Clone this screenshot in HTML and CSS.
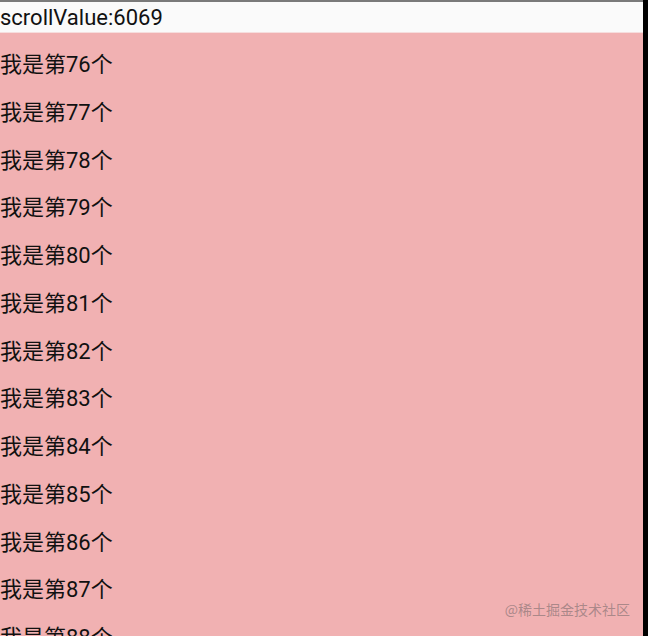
FILE: index.html
```html
<!DOCTYPE html>
<html>
<head>
<meta charset="utf-8">
<link rel="stylesheet" href="styles.css">
</head>
<body>
<div class="screen">
  <div class="main">
    <div class="topline"></div>
    <div class="header">scrollValue:6069</div>
    <div class="list">
      <div class="item">我是第76个</div>
      <div class="item">我是第77个</div>
      <div class="item">我是第78个</div>
      <div class="item">我是第79个</div>
      <div class="item">我是第80个</div>
      <div class="item">我是第81个</div>
      <div class="item">我是第82个</div>
      <div class="item">我是第83个</div>
      <div class="item">我是第84个</div>
      <div class="item">我是第85个</div>
      <div class="item">我是第86个</div>
      <div class="item">我是第87个</div>
      <div class="item">我是第88个</div>
    </div>
  </div>
  <div class="edge"></div>
  <div class="watermark">@稀土掘金技术社区</div>
</div>
</body>
</html>
```
FILE: styles.css
```css
html, body {
  margin: 0;
  padding: 0;
  width: 648px;
  height: 636px;
  overflow: hidden;
  background: #f1b1b2;
}
.screen {
  position: relative;
  display: flex;
  width: 648px;
  height: 636px;
  overflow: hidden;
  font-family: Roboto, "Noto Sans CJK SC", sans-serif;
  color: #111;
}
.main {
  flex: 1;
  display: flex;
  flex-direction: column;
  min-width: 0;
}
.topline {
  height: 2px;
  background: #7a7a7a;
  flex: none;
}
.header {
  flex: none;
  height: 30px;
  line-height: 32px;
  background: #fafafa;
  font-size: 22px;
  border-bottom: 1px solid #f6dede;
  white-space: nowrap;
  overflow: hidden;
}
.list {
  flex: 1;
  background: #f1b1b2;
  padding-top: 8px;
}
.item {
  height: 47.75px;
  line-height: 47.75px;
  font-size: 22px;
  white-space: nowrap;
}
.edge {
  flex: none;
  width: 5px;
  background: #000;
}
.watermark {
  position: absolute;
  right: 18px;
  top: 599px;
  font-size: 14px;
  color: rgba(110, 100, 102, 0.55);
  font-family: "Noto Sans CJK SC", sans-serif;
}
```
